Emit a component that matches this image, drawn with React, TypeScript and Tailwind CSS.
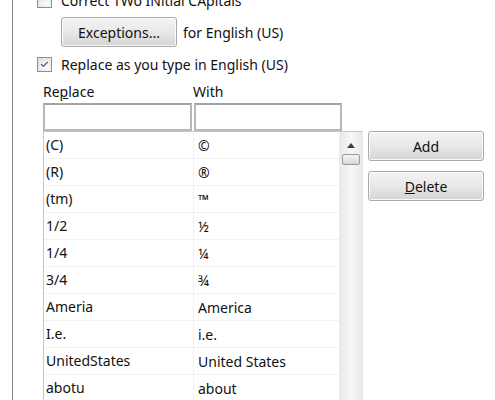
import { Check } from "lucide-react";

const rows: [string, string][] = [
  ["(C)", "©"],
  ["(R)", "®"],
  ["(tm)", "™"],
  ["1/2", "½"],
  ["1/4", "¼"],
  ["3/4", "¾"],
  ["Ameria", "America"],
  ["I.e.", "i.e."],
  ["UnitedStates", "United States"],
  ["abotu", "about"],
  ["accesories", "accessories"],
];

function CheckBox({ checked }: { checked?: boolean }) {
  return (
    <div className="flex h-[15px] w-[15px] shrink-0 items-center justify-center border border-[#8e8f8f] bg-gradient-to-br from-[#dcdcdc] to-[#fafafa] p-[2px]">
      <div className="flex h-full w-full items-center justify-center bg-gradient-to-br from-[#e6e6e6] to-white">
        {checked && <Check className="h-[13px] w-[13px] text-[#3c5fa8]" strokeWidth={3} />}
      </div>
    </div>
  );
}

function Button({ children, className = "" }: { children: React.ReactNode; className?: string }) {
  return (
    <div
      className={`flex h-[30px] w-[116px] items-center justify-center rounded-[3px] border border-[#a9a9a9] bg-gradient-to-b from-[#f4f4f4] via-[#e8e8e8] to-[#d4d4d4] text-[#111] shadow-[inset_0_0_0_1px_#fbfbfb] ${className}`}
    >
      {children}
    </div>
  );
}

export default function App() {
  return (
    <div
      className="h-[400px] w-[495px] overflow-hidden bg-white pl-3 text-[14px] text-[#111]"
      style={{ fontFamily: '"Noto Sans", "Open Sans", sans-serif' }}
    >
      <div className="flex h-full flex-col border-l border-[#868686] pl-6">
        {/* Correct TWo INitial CApitals */}
        <div className="-mt-[8px] flex h-[16px] items-center gap-[9px]">
          <CheckBox />
          <span>Correct TWo INitial CApitals</span>
        </div>

        <div className="mt-[9px] ml-6 flex items-center gap-[6px]">
          <Button>Exceptions...</Button>
          <span>for English (US)</span>
        </div>

        <div className="mt-[9px] flex h-[16px] items-center gap-[9px]">
          <CheckBox checked />
          <span>Replace as you type in English (US)</span>
        </div>

        {/* Labels */}
        <div className="mt-[11px] flex pl-[6px] leading-[18px]">
          <span className="w-[150px]">
            Re<span className="underline">p</span>lace
          </span>
          <span>With</span>
        </div>

        <div className="mt-[2px] flex pl-[6px]">
          <div className="flex flex-col">
            <div className="flex gap-[2px]">
              <div className="h-[28px] w-[149px] border-2 border-[#b8b8b8] border-t-[#a4a4a4] bg-white" />
              <div className="h-[28px] w-[148px] border-2 border-[#b8b8b8] border-t-[#a4a4a4] bg-white" />
            </div>
            <div className="flex h-[300px] w-[320px] border border-[#c6c6c6] border-r-0 bg-white">
              <div className="flex w-[295px] flex-col">
                {rows.map(([a, b]) => (
                  <div key={a} className="flex h-[27px] shrink-0 items-center border-b border-[#f1f1f1]">
                    <span className="w-[150px] border-r border-[#f0f0f0] pl-[2px] leading-[26px]">{a}</span>
                    <span className="pl-[4px]">{b}</span>
                  </div>
                ))}
              </div>
              {/* scrollbar */}
              <div className="flex w-[24px] flex-col items-center border-x border-[#ececec] bg-gradient-to-r from-[#e9e9e9] via-[#f7f7f7] to-[#eaeaea]">
                <div className="mt-[11px] h-0 w-0 border-x-[4px] border-b-[5px] border-x-transparent border-b-[#404040]" />
                <div className="mt-[6px] h-[11px] w-[18px] rounded-[2px] border border-[#9a9a9a] bg-gradient-to-b from-[#f4f4f4] to-[#d8d8d8]" />
              </div>
            </div>
          </div>

          <div className="mt-[28px] ml-[5px] flex flex-col gap-[10px]">
            <Button>Add</Button>
            <Button>
              <span>
                <span className="underline">D</span>elete
              </span>
            </Button>
          </div>
        </div>
      </div>
    </div>
  );
}
